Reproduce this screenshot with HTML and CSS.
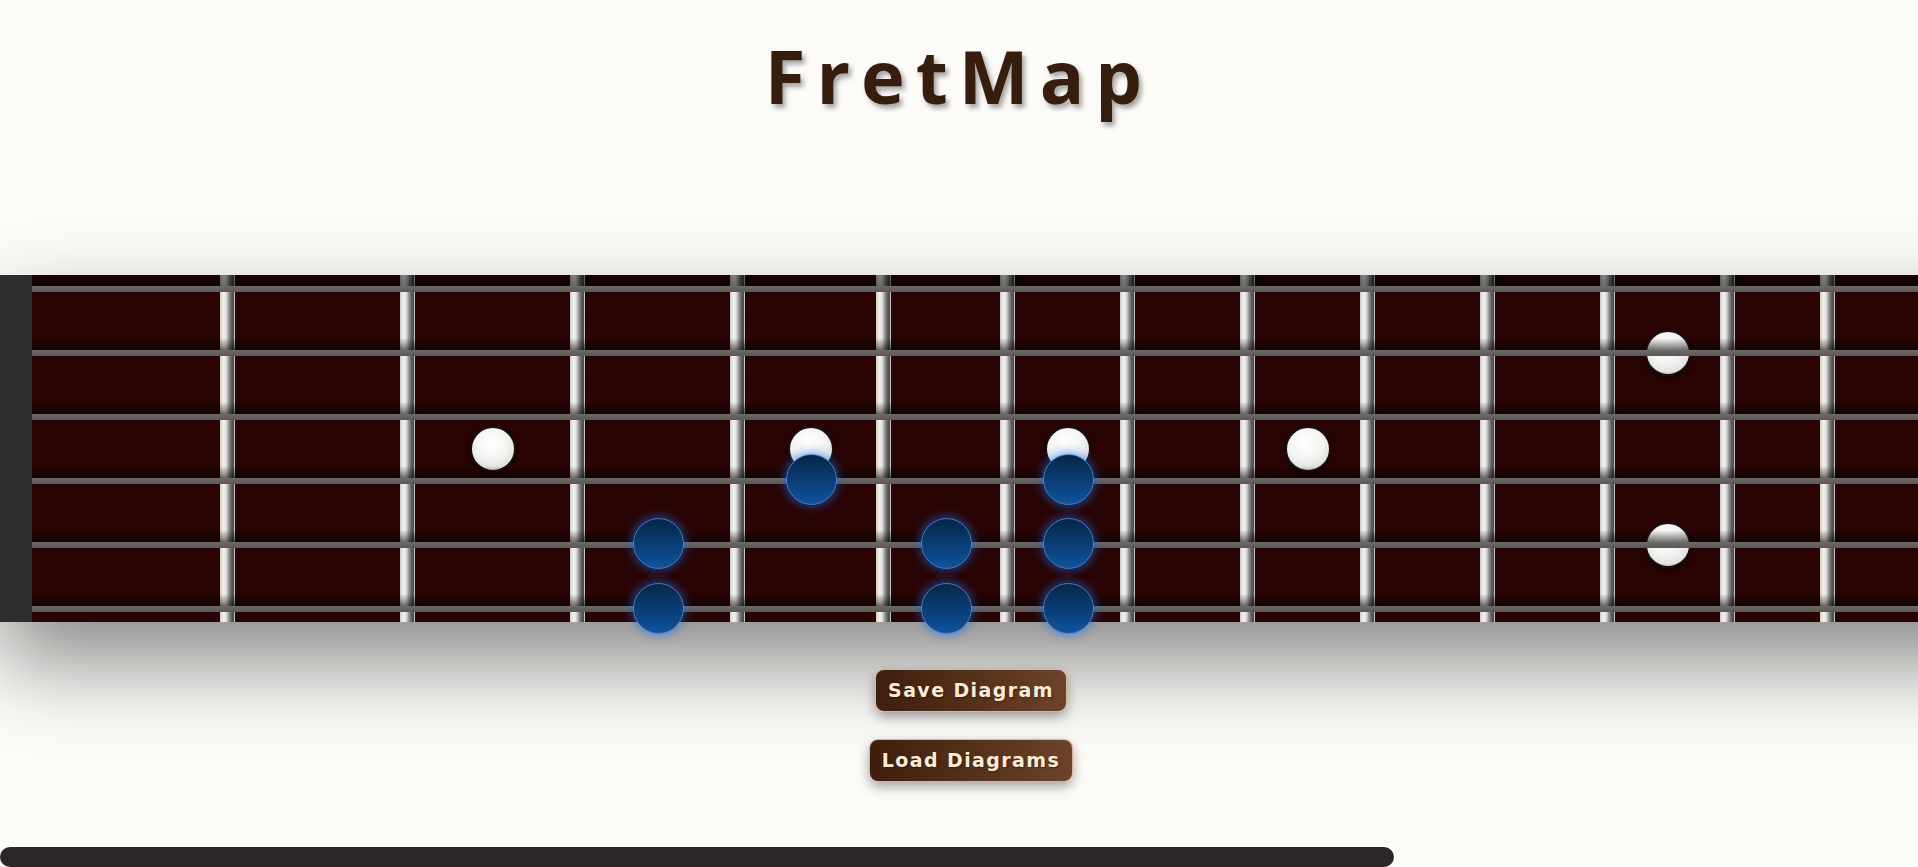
FILE: index.html
```html
<!DOCTYPE html>
<html lang="en">
<head>
<meta charset="utf-8">
<title>FretMap</title>
<link rel="stylesheet" href="styles.css">
</head>
<body>
<header class="header">
  <h1 class="title">FretMap</h1>
</header>

<main class="board-wrap">
  <div class="board">
    <div class="nut"></div>

    <div class="cell" style="width:188px"></div><div class="fret"></div>
    <div class="cell" style="width:165px"></div><div class="fret"></div>
    <div class="cell" style="width:155px">
      <span class="inlay inlay-mid"></span>
    </div><div class="fret"></div>
    <div class="cell" style="width:145px">
      <span class="note s5"></span>
      <span class="note s6"></span>
    </div><div class="fret"></div>
    <div class="cell" style="width:131px">
      <span class="inlay inlay-mid"></span>
      <span class="note s4"></span>
    </div><div class="fret"></div>
    <div class="cell" style="width:109px">
      <span class="note s5"></span>
      <span class="note s6"></span>
    </div><div class="fret"></div>
    <div class="cell" style="width:105px">
      <span class="inlay inlay-mid"></span>
      <span class="note s4"></span>
      <span class="note s5"></span>
      <span class="note s6"></span>
    </div><div class="fret"></div>
    <div class="cell" style="width:105px"></div><div class="fret"></div>
    <div class="cell" style="width:105px">
      <span class="inlay inlay-mid"></span>
    </div><div class="fret"></div>
    <div class="cell" style="width:105px"></div><div class="fret"></div>
    <div class="cell" style="width:105px"></div><div class="fret"></div>
    <div class="cell" style="width:105px">
      <span class="inlay inlay-top"></span>
      <span class="inlay inlay-bottom"></span>
    </div><div class="fret"></div>
    <div class="cell" style="width:85px"></div><div class="fret"></div>
    <div class="cell" style="width:85px"></div><div class="fret"></div>
    <div class="cell" style="width:85px"></div><div class="fret"></div>
    <div class="cell" style="width:85px">
      <span class="inlay inlay-mid"></span>
    </div><div class="fret"></div>
    <div class="cell" style="width:85px"></div><div class="fret"></div>
    <div class="cell" style="width:85px">
      <span class="inlay inlay-mid"></span>
    </div><div class="fret"></div>
    <div class="cell" style="width:85px"></div><div class="fret"></div>
    <div class="cell" style="width:85px"></div><div class="fret"></div>
    <div class="cell cell-fill"></div>

    <div class="strings">
      <div class="string-row"><div class="shade shade-top"></div><div class="string"></div></div>
      <div class="string-row"><div class="shade"></div><div class="string"></div></div>
      <div class="string-row"><div class="shade"></div><div class="string"></div></div>
      <div class="string-row"><div class="shade"></div><div class="string"></div></div>
      <div class="string-row"><div class="shade"></div><div class="string"></div></div>
      <div class="string-row"><div class="shade"></div><div class="string"></div></div>
    </div>
  </div>
</main>

<section class="controls">
  <button class="btn" type="button">Save Diagram</button>
  <button class="btn" type="button">Load Diagrams</button>
</section>

<div class="scroll-thumb" aria-hidden="true"></div>
</body>
</html>
```

FILE: styles.css
```css
html {
  background: #fcfbf8;
  overflow: hidden;
}

body {
  margin: 0;
  min-height: 867px;
  background: #fcfbf8;
  font-family: "Open Sans", "Liberation Sans", sans-serif;
}

.header {
  display: flex;
  justify-content: center;
  padding-top: 39px;
}

.title {
  margin: 0;
  font-family: "Open Sans", "Noto Sans", sans-serif;
  font-weight: 700;
  font-size: 74px;
  line-height: 74px;
  letter-spacing: 11px;
  color: #361d0d;
  text-shadow: 3px 4px 5px rgba(0, 0, 0, 0.35);
}

/* clipping viewport for the wide fretboard; padding keeps the shadow visible */
.board-wrap {
  display: block;
  overflow: hidden;
  margin-top: 62px;
  padding: 100px 0 200px;
  margin-bottom: -200px;
}

.board {
  position: relative;
  display: flex;
  width: 2639px;
  height: 347px;
  background: #290404;
  box-shadow: 0 40px 80px rgba(0, 0, 0, 0.45);
}

.nut {
  flex: 0 0 32px;
  background: #2e2e2e;
}

.cell {
  position: relative;
  flex-shrink: 0;
}

.cell-fill {
  flex: 1 1 auto;
}

.fret {
  flex: 0 0 15px;
  background: linear-gradient(to right,
    #cfcac6 0%,
    #f3f1ef 22%,
    #e6e4e2 40%,
    #9a9a9a 58%,
    #5a5a5a 78%,
    #4c4c4c 90%,
    #bdbdbd 96%,
    #d8d8d8 100%);
}

.inlay {
  position: absolute;
  left: 50%;
  margin-left: -23px;
  width: 42px;
  height: 42px;
  border-radius: 50%;
  border: 2px solid #1d0f0f;
  background: radial-gradient(circle at 45% 35%, #ffffff 0%, #f4f4f2 45%, #dcdcd9 80%, #c8c8c5 100%);
  box-shadow: 0 2px 4px rgba(0, 0, 0, 0.6);
}

.inlay-mid {
  top: 151px;
}

.inlay-top {
  top: 55px;
}

.inlay-bottom {
  top: 247px;
}

.strings {
  position: absolute;
  top: 0;
  left: 32px;
  right: 0;
  bottom: 0;
  z-index: 1;
  display: flex;
  flex-direction: column;
  overflow: hidden;
  pointer-events: none;
}

.string-row {
  flex: 0 0 64px;
  display: flex;
  flex-direction: column;
}

.shade {
  height: 12px;
  margin-top: -1px;
  background: linear-gradient(to bottom, rgba(0, 0, 0, 0) 0%, rgba(0, 0, 0, 0.25) 45%, rgba(0, 0, 0, 0.55) 100%);
}

.shade-top {
  background: linear-gradient(to bottom, rgba(0, 0, 0, 0.45) 0%, rgba(0, 0, 0, 0.55) 100%);
}

.string {
  height: 6px;
  background: linear-gradient(to bottom, #6e6c6a 0%, #646260 50%, #5a5856 100%);
}

.note {
  position: absolute;
  z-index: 2;
  left: 50%;
  margin-left: -25px;
  width: 49px;
  height: 49px;
  border-radius: 50%;
  border: 1px solid #3a84d4;
  background: linear-gradient(to bottom, #072647 0%, #0b3e78 55%, #11539c 100%);
  box-shadow: 0 0 10px 2px rgba(25, 110, 235, 0.55);
}

.s4 { top: 179px; }
.s5 { top: 243px; }
.s6 { top: 308px; }

.controls {
  position: relative;
  display: flex;
  flex-direction: column;
  align-items: center;
  gap: 27px;
  margin-top: 47px;
  padding-left: 24px;
}

.btn {
  padding: 10px 12px;
  border: 1px solid #dcb393;
  border-radius: 9px;
  background: linear-gradient(to right, #3f1e0d 0%, #55301a 50%, #6d432a 100%);
  color: #fbecd6;
  font-family: "DejaVu Sans", Verdana, sans-serif;
  font-weight: 700;
  font-size: 19px;
  line-height: 21px;
  letter-spacing: 1.4px;
  text-shadow: 1px 1px 2px rgba(0, 0, 0, 0.4);
  box-shadow: 0 5px 12px rgba(0, 0, 0, 0.35);
  cursor: pointer;
}

.scroll-thumb {
  position: fixed;
  left: 0;
  bottom: 0;
  width: 1394px;
  height: 20px;
  border-radius: 10px;
  background: #2b2726;
}
```
